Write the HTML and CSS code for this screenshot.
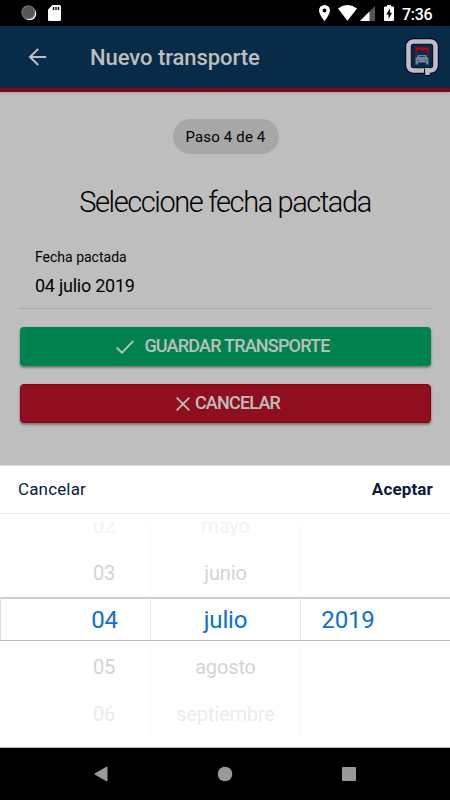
FILE: index.html
```html
<!DOCTYPE html>
<html lang="es">
<head>
  <meta charset="UTF-8" />
  <meta name="viewport" content="width=device-width, initial-scale=1.0"/>
  <title>Nuevo transporte</title>
  <link rel="stylesheet" href="styles.css">
</head>
<body>
  <div class="statusbar">
    <div class="status-left">
      <svg width="16" height="16" viewBox="0 0 16 16">
        <circle cx="8.500" cy="8.500" r="6.800" fill="#fff"/>
        <circle cx="7.300" cy="7.300" r="7" fill="#555"/>
        <circle cx="7.300" cy="7.300" r="6.200" fill="none" stroke="#888" stroke-width="1.200" stroke-dasharray="1 1"/>
      </svg>
      <svg width="13" height="16" viewBox="0 0 13 16">
        <path d="M4.5 0H11.5Q13 0 13 1.500V14.500Q13 16 11.500 16H1.500Q0 16 0 14.500V4.500Z" fill="#fff"/>
        <path d="M5.500 2v3M8 2v3M10.500 2v3" stroke="#000" stroke-width="1.400"/>
      </svg>
    </div>
    <div class="status-right">
      <svg class="pin" width="11" height="16" viewBox="0 0 11 16"><path d="M5.500 0A5.500 5.500 0 0 0 0 5.500C0 9.500 5.500 16 5.500 16S11 9.500 11 5.500A5.500 5.500 0 0 0 5.500 0Zm0 3.500a2 2 0 1 1 0 4a2 2 0 0 1 0-4Z" fill="#fff"/></svg>
      <svg class="wifi" width="19" height="16" viewBox="0 0 19 16"><path d="M0 3.500Q9.500-3.300 19 3.500L9.500 15.700Z" fill="#fff"/></svg>
      <svg class="signal" width="15" height="15" viewBox="0 0 15 15"><path d="M15 0V15H0Z" fill="#555"/><path d="M9.500 5.500V15H0Z" fill="#fff"/></svg>
      <svg class="battery" width="10" height="16" viewBox="0 0 10 16"><path d="M3 0h4v1.500h2q1 0 1 1V15q0 1-1 1H1q-1 0-1-1V2.500q0-1 1-1h2Z" fill="#fff"/><path d="M6 3.500L2.300 9.500H4.500V14L8 7.800H6Z" fill="#000"/></svg>
      <span class="clock">7:36</span>
    </div>
  </div>

  <div class="header">
    <svg width="19" height="18" viewBox="0 0 19 18" fill="none" stroke="#bebebe" stroke-width="2"><path d="M10.200 1L2 9L10.200 17M2 9H18.200"/></svg>
    <h1>Nuevo transporte</h1>
    <svg class="logo" width="34" height="40" viewBox="0 0 34 40">
      <rect x="3.300" y="3.300" width="27.400" height="29.400" rx="5" fill="none" stroke="#05053d" stroke-width="6.600"/>
      <path d="M19 30V34H20V37.500H25V33" fill="#bebebe" stroke="#05053d"/>
      <rect x="3.500" y="3.500" width="27" height="29" rx="5" fill="none" stroke="#bebebe" stroke-width="4.600"/>
      <path d="M20.500 30H24.500V37H20.500Z" fill="#bebebe"/>
      <path d="M19.500 30.500V35" stroke="#05053d"/>
      <path d="M11.200 18V10.500H22.800V18" fill="none" stroke="#b80008" stroke-width="1.300"/>
      <path d="M10.600 9.300H23.400V12H10.600Z" fill="#c00008"/>
      <path d="M13 17H21L22.300 19.500H23.500V26.500H21V24.500H13V26.500H10.500V19.500H11.700Z" fill="#70849b"/>
      <path d="M14 18.500H20M12.500 22.500H14M20 22.500H21.500" stroke="#29445f"/>
    </svg>
  </div>

  <div class="content">
    <div class="chip">Paso 4 de 4</div>
    <h2>Seleccione fecha pactada</h2>
    <div class="item">
      <label>Fecha pactada</label>
      <div class="value">04 julio 2019</div>
    </div>
    <button class="btn saveBtn">
      <svg width="18" height="14" viewBox="0 0 18 14" fill="none" stroke="#bebebe" stroke-width="1.800"><path d="M.7 7.500L6 12.700L17.300 1"/></svg>
      <span>GUARDAR TRANSPORTE</span>
    </button>
    <button class="btn cancelBtn">
      <svg width="14" height="14" viewBox="0 0 14 14" fill="none" stroke="#bebebe" stroke-width="1.800"><path d="M.7.7L13.300 13.300M13.300.7L.7 13.300"/></svg>
      <span>CANCELAR</span>
    </button>
  </div>

  <div class="picker">
    <div class="toolbar">
      <button>Cancelar</button>
      <button class="accept">Aceptar</button>
    </div>
    <div class="columns">
      <div class="col day">
        <div class="opt far">02</div>
        <div class="opt">03</div>
        <div class="opt selected">04</div>
        <div class="opt next">05</div>
        <div class="opt last">06</div>
      </div>
      <div class="col month">
        <div class="opt far">mayo</div>
        <div class="opt">junio</div>
        <div class="opt selected">julio</div>
        <div class="opt next">agosto</div>
        <div class="opt last">septiembre</div>
      </div>
      <div class="col year">
        <div class="opt far"></div>
        <div class="opt"></div>
        <div class="opt selected">2019</div>
        <div class="opt next"></div>
        <div class="opt last"></div>
      </div>
    </div>
  </div>

  <div class="navbar">
    <svg width="14" height="16" viewBox="0 0 14 16"><path d="M12.500.8Q13.500.3 13.500 1.500V14.500Q13.500 15.700 12.500 15.200L1 8.700Q0 8 1 7.300Z" fill="#999"/></svg>
    <svg width="16" height="16" viewBox="0 0 16 16"><circle cx="8" cy="8" r="7.300" fill="#999"/></svg>
    <svg width="14" height="14" viewBox="0 0 14 14"><rect width="14" height="14" rx=".7" fill="#999"/></svg>
  </div>
</body>
</html>
```
FILE: styles.css
```css
* {
  box-sizing: border-box;
}
body {
  margin: 0;
  height: 800px;
  overflow: hidden;
  display: flex;
  flex-direction: column;
  font-family: Roboto, sans-serif;
  background: #bebebe;
  color: #000;
}
svg {
  display: block;
  flex-shrink: 0;
}
.statusbar {
  height: 26px;
  background: #000;
  display: flex;
  justify-content: space-between;
  padding: 5px 17px 0 21px;
}
.status-left {
  display: flex;
  gap: 11px;
}
.status-right {
  display: flex;
  color: #fff;
}
.wifi { margin-left: 8px; }
.signal { margin: 1px 0 0 3px; }
.battery { margin-left: 9px; }
.clock {
  width: 31px;
  margin-left: 8px;
  font-size: 16px;
  font-weight: 500;
  line-height: 19px;
  letter-spacing: -0.3px;
  white-space: nowrap;
}
.header {
  height: 66px;
  background: #082c47;
  border-bottom: 4px solid #780919;
  box-shadow: 0 1px 3px rgba(0,0,0,0.15);
  display: flex;
  align-items: center;
  padding: 0 11px 0 28px;
}
.header h1 {
  margin: 1px auto 0 43px;
  font-size: 22px;
  font-weight: 500;
  line-height: 26px;
  letter-spacing: -0.05px;
  color: #bebebe;
}
.logo {
  margin-top: 1px;
}
.content {
  height: 373px;
  display: flex;
  flex-direction: column;
  padding: 27px 18px 0;
}
.chip {
  align-self: center;
  width: 106px;
  height: 35px;
  margin-left: 1px;
  border-radius: 18px;
  background: #a7a7a7;
  text-align: center;
  font-size: 15px;
  line-height: 36px;
  letter-spacing: 0.15px;
}
h2 {
  margin: 30px 0 0;
  font-size: 29px;
  font-weight: 300;
  line-height: 37px;
  letter-spacing: -1.4px;
  text-align: center;
}
.item {
  height: 88px;
  padding: 28px 17px 0;
  border-bottom: 1px solid #aaa;
}
.item label {
  display: block;
  font-size: 14px;
  line-height: 16px;
}
.value {
  margin-top: 10px;
  font-size: 18px;
  line-height: 21px;
  letter-spacing: -0.25px;
}
.btn {
  height: 39px;
  margin: 18px 0 0 2px;
  padding: 0;
  width: 411px;
  border: none;
  border-radius: 4px;
  display: flex;
  align-items: center;
  justify-content: center;
  font-family: inherit;
  font-size: 18px;
  font-weight: 500;
  letter-spacing: -0.8px;
  color: #bebebe;
  box-shadow: 0 2px 2px rgba(0,0,0,0.25), 0 1px 3px rgba(0,0,0,0.2);
}
.btn span {
  margin-bottom: 2px;
}
.saveBtn {
  background: #00824f;
  gap: 10px;
  padding-right: 5px;
}
.cancelBtn {
  background: #8f0f1f;
  border: 1px solid #87000a;
  gap: 5px;
  padding-left: 5px;
}
.picker {
  height: 283px;
  background: #fff;
  border-top: 1px solid #dcdce0;
  border-bottom: 1px solid #bbb;
}
.toolbar {
  height: 48px;
  display: flex;
  align-items: center;
  justify-content: space-between;
  padding: 0 17px 2px 18px;
  border-bottom: 1px solid #ececee;
}
.toolbar button {
  border: none;
  background: none;
  padding: 0;
  font-family: inherit;
  font-size: 17px;
  letter-spacing: 0.15px;
  color: #071a3d;
}
.toolbar .accept {
  font-weight: 700;
}
.columns {
  height: 233px;
  display: grid;
  grid-template-columns: 151px 150px 149px;
  overflow: hidden;
}
.col {
  text-align: center;
}
.opt {
  height: 47px;
  line-height: 47px;
  font-size: 20px;
  letter-spacing: -0.15px;
  color: #d3d3d3;
  border-right: 1px solid #fafafa;
}
/* rows fade out towards both ends of the wheel */
.far {
  height: 36px;
  line-height: 25px;
  color: #f3f3f3;
  clip-path: inset(8px 0 0 0);
}
.next {
  height: 50px;
  line-height: 52px;
}
.last {
  color: #ececec;
}
.selected {
  height: 44px;
  font-size: 24px;
  line-height: 43px;
  color: #0a70d6;
  border-top: 2px solid #cfcfd6;
  border-bottom: 1px solid #b9b9c1;
  border-right: 1px solid #e8e8e8;
}
.day .opt {
  padding-left: 58px;
}
.day .selected {
  border-left: 1px solid #ddd;
}
.year .opt {
  border-right: none;
  padding-right: 55px;
}
.navbar {
  height: 52px;
  background: #000;
  display: flex;
  align-items: center;
  justify-content: space-between;
  padding: 0 94px;
}
```
